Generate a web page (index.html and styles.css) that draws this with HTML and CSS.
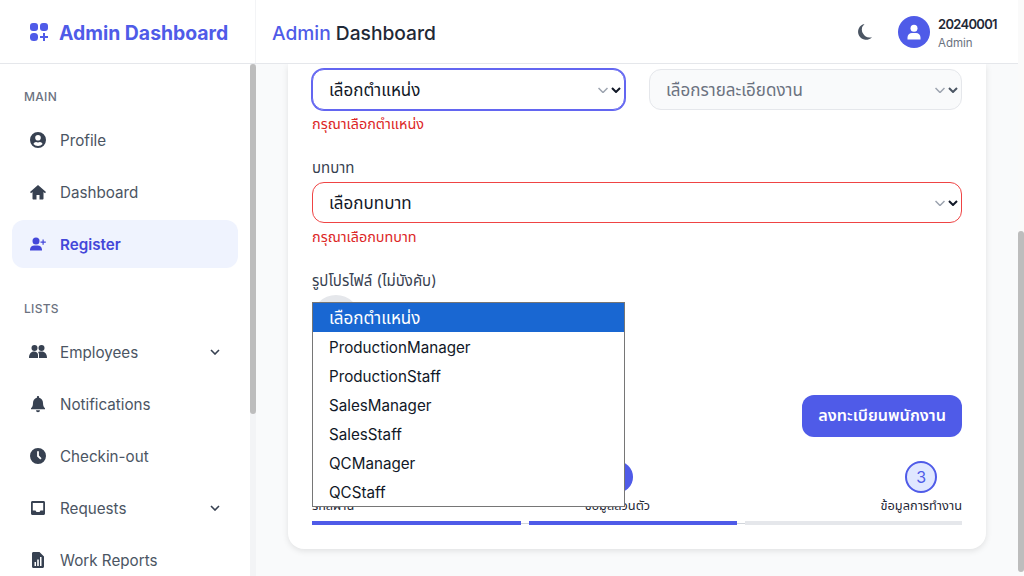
FILE: index.html
```html
<!DOCTYPE html>
<html lang="en">
<head>
    <meta charset="UTF-8">
    <title>Admin Dashboard</title>
    <link rel="stylesheet" href="styles.css">
</head>
<body>
    <div class="app">
        <div class="app-body">
            <header class="topbar">
                <div class="brand">
                    <svg class="brand-icon" viewBox="0 0 18 18"><rect x="0" y="0" width="8" height="8" rx="3"/><rect x="10" y="0" width="8" height="8" rx="3"/><rect x="0" y="10" width="8" height="8" rx="3.5"/><path d="M13 10h2v3h3v2h-3v3h-2v-3h-3v-2h3z"/></svg>
                    <span>Admin Dashboard</span>
                </div>
                <div class="topbar-main">
                    <h1 class="page-title"><span>Admin</span> Dashboard</h1>
                    <svg class="moon" viewBox="0 0 16 16"><path d="M8.500 0A8 8 0 1 0 16 13.200 7.800 7.800 0 0 1 8.500 0z"/></svg>
                    <div class="avatar">
                        <svg viewBox="0 0 16 16"><circle cx="8" cy="4.200" r="3.500"/><path d="M1.500 15.500v-2A4.500 4.500 0 0 1 6 9h4a4.500 4.500 0 0 1 4.500 4.500v2z"/></svg>
                    </div>
                    <div class="user">
                        <div class="user-id">20240001</div>
                        <div class="user-role">Admin</div>
                    </div>
                </div>
            </header>

            <div class="below">
                <nav class="sidebar">
                    <div class="nav-title">MAIN</div>
                    <a class="nav-item">
                        <svg viewBox="-1 -1 18 18"><path d="M8 0a8 8 0 1 0 0 16A8 8 0 0 0 8 0zm0 3a2.800 2.800 0 1 1 0 5.600A2.800 2.800 0 0 1 8 3zm0 11a6 6 0 0 1-4.600-2.100C3.900 10.800 5 10 6 10c.7.200 1.300.400 2 .400s1.300-.200 2-.400c1 0 2.100.800 2.600 1.900A6 6 0 0 1 8 14z"/></svg>
                        <span>Profile</span>
                    </a>
                    <a class="nav-item">
                        <svg viewBox="-1 -1 18 18"><path d="M8 1 0 8l1 1.200L2.500 8v6.500c0 .600.400 1 1 1h3v-4.500h3v4.500h3c.600 0 1-.400 1-1V8L15 9.200 16 8z"/></svg>
                        <span>Dashboard</span>
                    </a>
                    <a class="nav-item active">
                        <svg viewBox="-1 -1 18 18"><circle cx="6" cy="5" r="3.500"/><path d="M0 14.500v-1A4.500 4.500 0 0 1 4.500 9.500h3a4.500 4.500 0 0 1 4.500 4v1zM12.500 3.500h1.200v2h2.100v1.200h-2.100v2h-1.200v-2h-2V5.500h2z"/></svg>
                        <span>Register</span>
                    </a>

                    <div class="nav-title lists">LISTS</div>
                    <a class="nav-item">
                        <svg viewBox="0 -1 18 18"><circle cx="5.500" cy="4" r="3"/><circle cx="12.500" cy="4" r="3"/><path d="M0 14c0-4 2-6.500 5-6.500 2.500 0 4 1.500 4 3.500v3zM10 14v-3c0-1.300-.400-2.400-1-3 1-.400 2.500-.500 3.500-.500 3.500 0 5.500 2.500 5.500 6.500z"/></svg>
                        <span>Employees</span>
                        <svg class="chevron" viewBox="0 0 10 6"><path d="M1 1l4 4 4-4"/></svg>
                    </a>
                    <a class="nav-item">
                        <svg viewBox="-1 -1 18 18"><path d="M8 0C7.300 0 6.900.500 6.900 1.100v.600C4.300 2.300 3 4.500 3 7c0 3-1 4.300-2 5.200v1.100h14v-1.100C14 11.300 13 10 13 7c0-2.500-1.300-4.700-3.900-5.300v-.600C9.100.500 8.700 0 8 0zM6 14.300a2 2 0 0 0 4 0z"/></svg>
                        <span>Notifications</span>
                    </a>
                    <a class="nav-item">
                        <svg viewBox="-1 -1 18 18"><path d="M8 0a8 8 0 1 0 0 16A8 8 0 0 0 8 0zm-.900 3.200h1.800v4.400l2.700 2.700-1.300 1.300-3.200-3.200z"/></svg>
                        <span>Checkin-out</span>
                    </a>
                    <a class="nav-item">
                        <svg viewBox="-1 -1 18 18"><path d="M2.500 1h11c.900 0 1.500.600 1.500 1.500v11c0 .900-.600 1.500-1.500 1.500h-11c-.900 0-1.500-.600-1.500-1.500v-11C1 1.600 1.600 1 2.500 1zm.300 2v7.500h2.700l1 1.500h3l1-1.500h2.700V3z"/></svg>
                        <span>Requests</span>
                        <svg class="chevron" viewBox="0 0 10 6"><path d="M1 1l4 4 4-4"/></svg>
                    </a>
                    <a class="nav-item">
                        <svg viewBox="-1 -1 18 18"><path fill-rule="evenodd" d="M3.500 0h6L14 4.500v10c0 .900-.600 1.500-1.500 1.500h-9C2.600 16 2 15.400 2 14.500v-13C2 .600 2.600 0 3.500 0zM4.500 10v4H6v-4zm2.700-2.500V14h1.600V7.500zM10 5v9h1.500V5z"/></svg>
                        <span>Work Reports</span>
                    </a>
                </nav>
                <div class="scrollbar"><div class="thumb thumb-side"></div></div>

                <main class="content">
                    <section class="card">
                        <div class="row">
                            <div class="field">
                                <select class="input focused">
                                    <option>เลือกตำแหน่ง</option>
                                </select>
                                <p class="error">กรุณาเลือกตำแหน่ง</p>
                            </div>
                            <div class="field">
                                <select class="input disabled">
                                    <option>เลือกรายละเอียดงาน</option>
                                </select>
                            </div>
                        </div>

                        <div class="field">
                            <label class="label">บทบาท</label>
                            <select class="input invalid">
                                <option>เลือกบทบาท</option>
                            </select>
                            <p class="error">กรุณาเลือกบทบาท</p>
                        </div>

                        <div class="field">
                            <label class="label">รูปโปรไฟล์ (ไม่บังคับ)</label>
                            <div class="photo"></div>
                        </div>

                        <div class="actions">
                            <button class="submit">ลงทะเบียนพนักงาน</button>
                        </div>

                        <div class="steps">
                            <div class="step">
                                <div class="step-num done">1</div>
                                <div class="step-name">รหัสผ่าน</div>
                            </div>
                            <div class="step">
                                <div class="step-num done">2</div>
                                <div class="step-name">ข้อมูลส่วนตัว</div>
                            </div>
                            <div class="step">
                                <div class="step-num current">3</div>
                                <div class="step-name">ข้อมูลการทำงาน</div>
                            </div>
                        </div>
                        <div class="progress">
                            <div class="bar on"></div>
                            <div class="bar on"></div>
                            <div class="bar"></div>
                        </div>
                    </section>

                    <!-- open list of the first select -->
                    <ul class="dropdown">
                        <li class="selected">เลือกตำแหน่ง</li>
                        <li>ProductionManager</li>
                        <li>ProductionStaff</li>
                        <li>SalesManager</li>
                        <li>SalesStaff</li>
                        <li>QCManager</li>
                        <li>QCStaff</li>
                    </ul>
                </main>
            </div>
        </div>
        <div class="scrollbar page-bar"><div class="thumb thumb-page"></div></div>
    </div>
</body>
</html>
```

FILE: styles.css
```css
/* Global Styles */
* {
    margin: 0;
    padding: 0;
    box-sizing: border-box;
}

body {
    font-family: 'Inter', 'Noto Sans Thai', 'Noto Sans', sans-serif;
    background-color: #f9fafb;
    color: #1f2937;
    overflow: hidden;
}

.app {
    display: flex;
    height: 100vh;
}

.app-body {
    flex: 1;
    min-width: 0;
    display: flex;
    flex-direction: column;
}

/* Scrollbars */
.scrollbar {
    width: 6px;
    flex-shrink: 0;
    background-color: #f3f4f6;
}

.page-bar {
    background-color: #fafafa;
}

.thumb {
    background-color: #bdbdbd;
    border-radius: 3px;
}

.thumb-side {
    height: 350px;
}

.thumb-page {
    height: 341px;
    margin-top: 231px;
}

/* Header */
.topbar {
    display: flex;
    height: 64px;
    flex-shrink: 0;
    background-color: #fff;
    border-bottom: 1px solid #e5e7eb;
}

.brand {
    width: 256px;
    display: flex;
    align-items: center;
    gap: 11px;
    padding-left: 30px;
    border-right: 1px solid #f3f4f6;
    color: #4f5be8;
    font-size: 19.4px;
    font-weight: 700;
}

.brand span {
    padding-top: 2px;
}

.brand-icon {
    width: 18px;
    height: 18px;
    fill: #4f5be8;
}

.topbar-main {
    flex: 1;
    display: flex;
    align-items: center;
    padding: 0 20px 0 16px;
}

.page-title {
    flex: 1;
    padding-top: 2px;
    font-size: 19.2px;
    font-weight: 500;
    color: #1f2937;
}

.page-title span {
    color: #4f5be8;
}

.moon {
    width: 16px;
    height: 16px;
    fill: #4b5563;
    margin-right: 26px;
}

.avatar {
    width: 32px;
    height: 32px;
    border-radius: 50%;
    background-color: #4f5be8;
    display: flex;
    align-items: center;
    justify-content: center;
    margin-right: 8px;
}

.avatar svg {
    width: 16px;
    height: 16px;
    fill: #fff;
}

.user {
    width: 60px;
    padding-top: 4px;
}

.user-id {
    font-size: 13px;
    font-weight: 600;
    line-height: 18px;
    letter-spacing: -0.7px;
    color: #1f2937;
}

.user-role {
    font-size: 11.5px;
    line-height: 20px;
    color: #6b7280;
}

.below {
    flex: 1;
    min-height: 0;
    display: flex;
}

/* Sidebar */
.sidebar {
    width: 250px;
    flex-shrink: 0;
    background-color: #fff;
    padding: 24px 12px 0;
    overflow: hidden;
}

.nav-title {
    padding-left: 12px;
    margin-bottom: 10px;
    font-size: 12px;
    line-height: 18px;
    font-weight: 500;
    letter-spacing: 0.3px;
    color: #6b7280;
}

.nav-title.lists {
    margin-top: 32px;
}

.nav-item {
    display: flex;
    align-items: center;
    gap: 13px;
    height: 48px;
    width: 226px;
    padding: 0 18px 0 17px;
    margin-bottom: 4px;
    border-radius: 12px;
    font-size: 15.2px;
    color: #4b5563;
}

.nav-item > svg:first-child {
    width: 18px;
    height: 18px;
    flex-shrink: 0;
    fill: #374151;
}

.nav-item span {
    flex: 1;
}

.nav-item.active {
    background-color: #eff3fe;
    color: #4347d9;
    font-weight: 600;
}

.nav-item.active > svg:first-child {
    fill: #4347d9;
}

.chevron {
    width: 10px;
    height: 6px;
    fill: none;
    stroke: #374151;
    stroke-width: 1.6;
}

/* Main content */
.content {
    flex: 1;
    min-width: 0;
    position: relative;
    padding: 0 32px;
    overflow: hidden;
}

.card {
    height: 485px;
    padding: 5px 24px 0;
    background-color: #fff;
    border-radius: 0 0 16px 16px;
    box-shadow: 0 2px 6px rgba(0, 0, 0, 0.1);
}

.row {
    display: grid;
    grid-template-columns: 1fr 1fr;
    gap: 24px;
}

.field {
    margin-bottom: 24px;
}

.label {
    display: block;
    font-size: 15px;
    line-height: 20px;
    margin-bottom: 4px;
    color: #374151;
}

.input {
    display: block;
    appearance: none;
    width: 100%;
    height: 41px;
    padding: 0 50px 0 16px;
    border: 1px solid #d1d5db;
    border-radius: 12px;
    font-family: inherit;
    font-size: 17px;
    color: #111827;
    background-color: #fff;
    background-image:
        url("data:image/svg+xml,%3Csvg xmlns='http://www.w3.org/2000/svg' viewBox='0 0 10 6' fill='none'%3E%3Cpath stroke='%23111827' stroke-width='2' d='M1 1l4 4 4-4'/%3E%3C/svg%3E"),
        url("data:image/svg+xml,%3Csvg xmlns='http://www.w3.org/2000/svg' viewBox='0 0 10 6' fill='none'%3E%3Cpath stroke='%239ca3af' stroke-width='1.5' d='M.5 1l4.500 4.500L9.500 1'/%3E%3C/svg%3E");
    background-repeat: no-repeat;
    background-position: right 3px center, right 16px center;
    background-size: 10px 6px, 10px 6px;
}

.input.focused {
    border-color: #6366f1;
    box-shadow: 0 0 0 1px #6366f1;
}

.input.invalid {
    border-color: #ef4444;
}

.input.disabled {
    background-color: #f9fafb;
    border-color: #e5e7eb;
    color: #6b7280;
    background-image:
        url("data:image/svg+xml,%3Csvg xmlns='http://www.w3.org/2000/svg' viewBox='0 0 10 6' fill='none'%3E%3Cpath stroke='%234b5563' stroke-width='2' d='M1 1l4 4 4-4'/%3E%3C/svg%3E"),
        url("data:image/svg+xml,%3Csvg xmlns='http://www.w3.org/2000/svg' viewBox='0 0 10 6' fill='none'%3E%3Cpath stroke='%239ca3af' stroke-width='1.5' d='M.5 1l4.500 4.500L9.500 1'/%3E%3C/svg%3E");
}

.error {
    margin-top: 4px;
    font-size: 14.4px;
    line-height: 20px;
    color: #dc2626;
}

.photo {
    width: 48px;
    height: 48px;
    border-radius: 50%;
    background-color: #e5e7eb;
}

.actions {
    display: flex;
    justify-content: flex-end;
    margin-top: 52px;
}

.submit {
    height: 42px;
    padding: 0 16px;
    border: none;
    border-radius: 12px;
    background-color: #4f5be8;
    color: #fff;
    font-family: inherit;
    font-size: 16.2px;
    font-weight: 600;
}

/* Stepper */
.steps {
    display: flex;
    justify-content: space-between;
    margin-top: 24px;
}

.step {
    display: flex;
    flex-direction: column;
    align-items: center;
}

.step-num {
    width: 32px;
    height: 32px;
    border-radius: 50%;
    display: flex;
    align-items: center;
    justify-content: center;
    font-size: 16px;
}

.step-num.done {
    background-color: #4f5be8;
    color: #fff;
}

.step-num.current {
    background-color: #e0e7ff;
    border: 2px solid #4f5be8;
    color: #4f5be8;
}

.step-name {
    margin-top: 4px;
    font-size: 12.8px;
    line-height: 18px;
    color: #1f2937;
    white-space: nowrap;
}

.progress {
    display: grid;
    grid-template-columns: 209fr 208fr 217fr;
    gap: 8px;
    margin-top: 6px;
    background: linear-gradient(#d1d5db, #d1d5db) center / 100% 1px no-repeat;
}

.bar {
    height: 4px;
    background-color: #e5e7eb;
}

.bar.on {
    background-color: #4f5be8;
}

/* Open select list */
.dropdown {
    position: absolute;
    top: 238px;
    left: 56px;
    width: 313px;
    list-style: none;
    background-color: #fff;
    border: 1px solid #767676;
}

.dropdown li {
    height: 29px;
    padding: 2px 0 0 16px;
    line-height: 28px;
    font-size: 15.2px;
    color: #111827;
}

.dropdown li.selected {
    padding-top: 1px;
    font-size: 17px;
    background-color: #1967d2;
    color: #fff;
}
```
